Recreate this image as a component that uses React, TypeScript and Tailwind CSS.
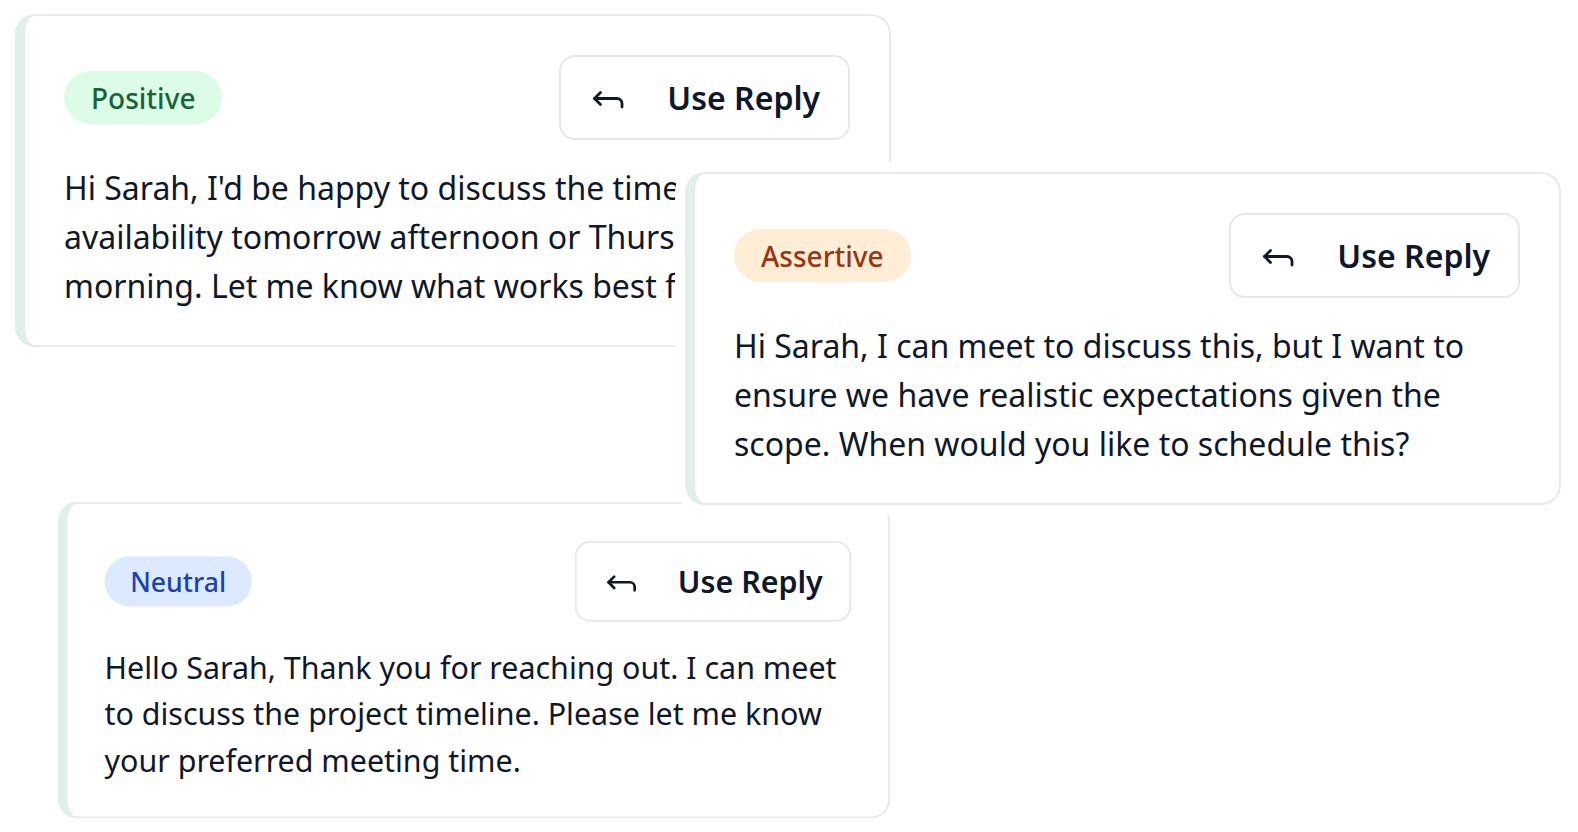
import React from 'react';

type Tone = 'positive' | 'assertive' | 'neutral';

const toneStyles: Record<Tone, { label: string; badge: string }> = {
    positive: { label: 'Positive', badge: 'bg-[#dcfce7] text-[#166534]' },
    assertive: { label: 'Assertive', badge: 'bg-[#ffedd5] text-[#9a3412]' },
    neutral: { label: 'Neutral', badge: 'bg-[#dbeafe] text-[#1e40af]' },
};

const ReplyIcon: React.FC = () => (
    <svg width="34" height="20" viewBox="0 0 34 20" fill="none" stroke="currentColor" strokeWidth="2.8" strokeLinecap="round" strokeLinejoin="round" className="mt-[3px] shrink-0">
        <path d="M8.5 3.5 L2.5 9.5 L8.5 15.5" />
        <path d="M2.5 9.5 H25 A5 5 0 0 1 30 14.5 V18" />
    </svg>
);

interface ReplyCardProps {
    tone: Tone;
    text: string;
    className?: string;
}

const ReplyCard: React.FC<ReplyCardProps> = ({ tone, text, className }) => {
    const t = toneStyles[tone];
    return (
        <div className={`absolute w-[876px] rounded-[20px] border-2 border-l-[10px] border-[#e6e9f0] border-l-[#dff0ea] bg-white pt-[39px] pr-[39px] pb-[35px] pl-[39px] shadow-[0_2px_4px_rgba(15,23,42,0.04)] ring-[10px] ring-white ${className ?? ''}`}>
            <div className="flex items-center justify-between">
                <span className={`flex h-[53px] items-center rounded-full px-[27px] text-[28px] font-medium ${t.badge}`}>{t.label}</span>
                <button className="flex h-[85px] items-center gap-[41px] rounded-[16px] border-2 border-[#e3e8ef] bg-white pr-[28px] pl-[31px] text-[32px] font-semibold text-[#0f172a]">
                    <ReplyIcon />
                    <span>Use Reply</span>
                </button>
            </div>
            <p className="mt-[23px] text-[32px] leading-[49px] text-[#0f172a]">{text}</p>
        </div>
    );
};

const App: React.FC = () => {
    return (
        <div className="relative h-[832px] w-[1578px] overflow-hidden bg-white font-['Noto_Sans',sans-serif]">
            <ReplyCard
                tone="positive"
                className="top-[14px] left-[15px]"
                text="Hi Sarah, I'd be happy to discuss the timeline. I have availability tomorrow afternoon or Thursday morning. Let me know what works best for you."
            />
            <ReplyCard
                tone="neutral"
                className="top-[502px] left-[58px] origin-top-left scale-95"
                text="Hello Sarah, Thank you for reaching out. I can meet to discuss the project timeline. Please let me know your preferred meeting time."
            />
            <ReplyCard
                tone="assertive"
                className="top-[172px] left-[685px]"
                text="Hi Sarah, I can meet to discuss this, but I want to ensure we have realistic expectations given the scope. When would you like to schedule this?"
            />
        </div>
    );
};

export default App;
